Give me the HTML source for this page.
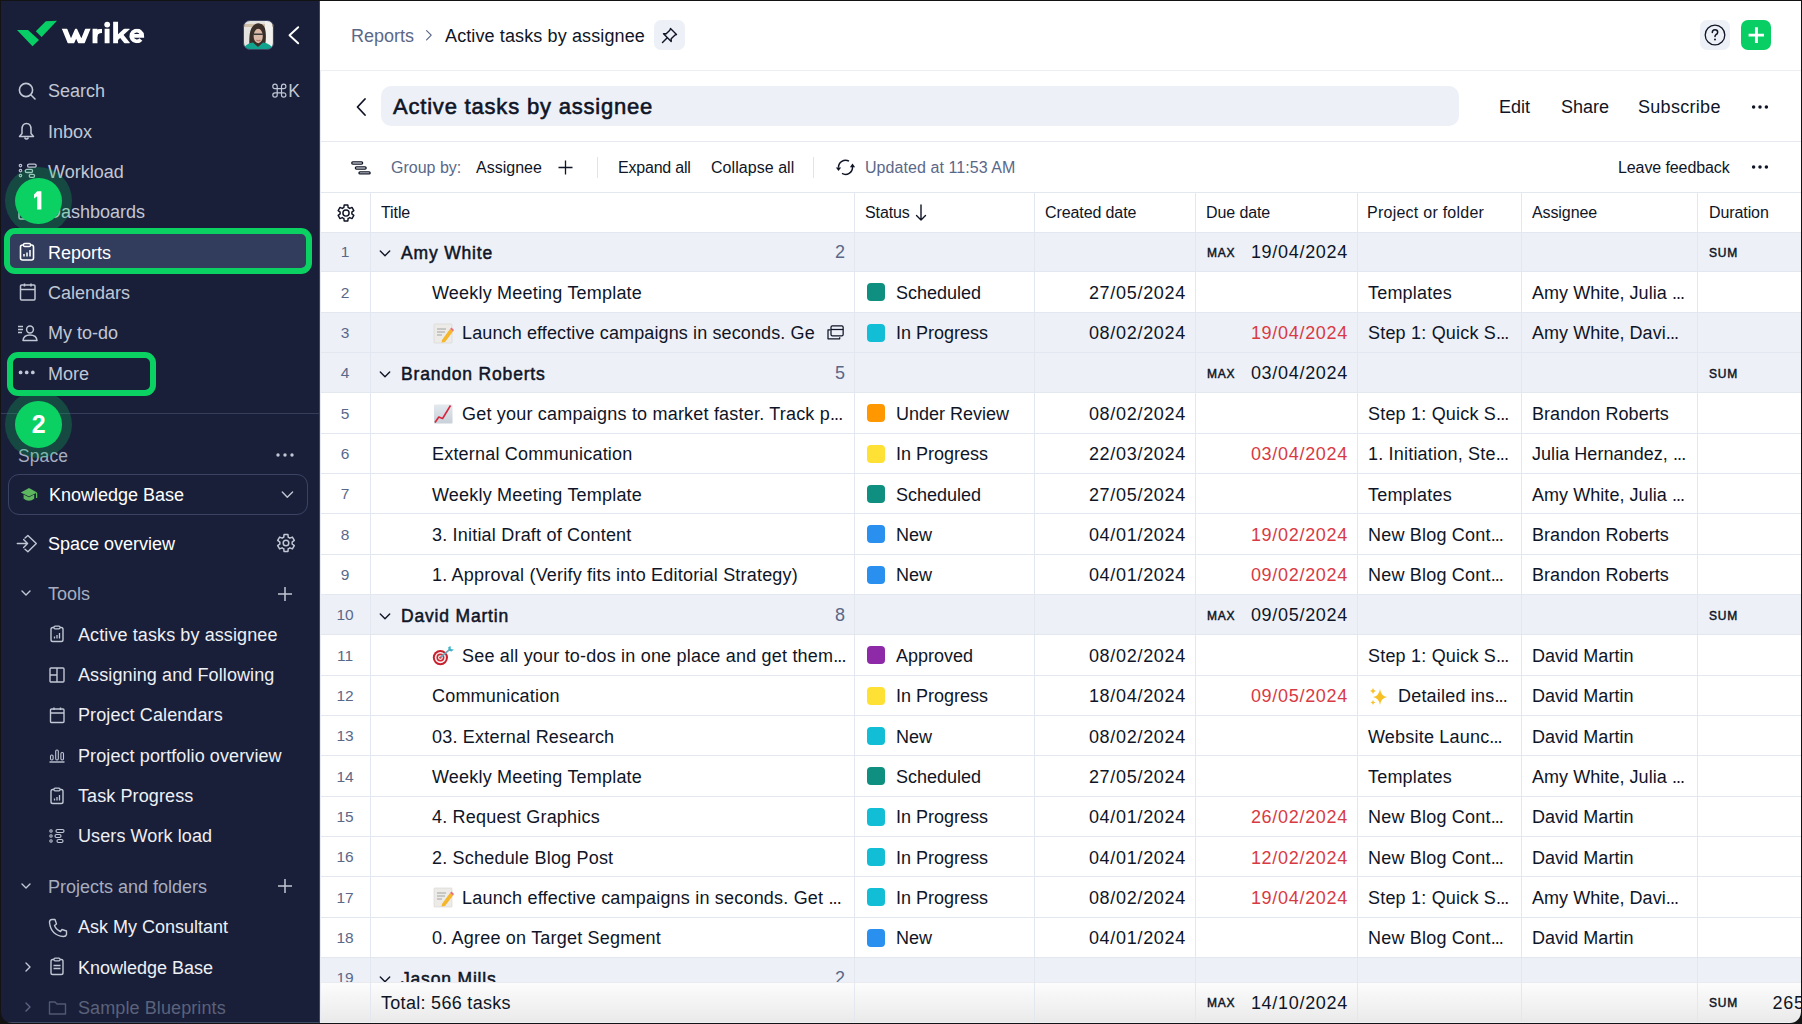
<!DOCTYPE html><html><head><meta charset="utf-8"><style>
*{margin:0;padding:0;box-sizing:border-box}
html,body{width:1802px;height:1024px;overflow:hidden;background:#121212}
body{position:relative;font-family:"Liberation Sans",sans-serif}
.t{position:absolute;white-space:nowrap}
.b{position:absolute}
#win{position:absolute;left:0;top:0;width:1802px;height:1024px;overflow:hidden;background:#fff}
#frame{position:absolute;left:1px;top:1px;width:1800px;height:1022px;border-radius:0 0 11px 11px;box-shadow:0 0 0 40px #131313;pointer-events:none}
</style></head><body><div id="win">

<div class="b" style="left:0px;top:0px;width:320px;height:1024px;background:#191f39"></div>
<svg class="b" style="left:14px;top:18px;" width="48" height="32" viewBox="0 0 48 32" fill="none"><path d="M3 12 L14 12 L25 22 L18.5 28.2 Z" fill="#08cf65"/><path d="M21.8 13.2 L31.8 3.2 L43 2.8 L27.6 19 Z" fill="#08cf65"/></svg>
<svg class="b" style="left:56px;top:18px;" width="94" height="30" viewBox="0 0 94 30" fill="none"><defs><clipPath id="wc"><rect x="0" y="28.7" width="200" height="14.6"/><rect x="110" y="21.8" width="10" height="21.5"/></clipPath></defs><g transform="translate(-56 -18)"><g clip-path="url(#wc)" fill="none" stroke="#fff" stroke-width="4.9"><path d="M63.4 26 L70.9 44.5 L76.1 32.8 L81.5 44.5 L89 26" stroke-linejoin="miter" stroke-miterlimit="3"/><path d="M95 44 V28"/><path d="M95 37 Q95.2 31 102 30.9" stroke-width="4.4"/><path d="M107.1 44 V28"/><path d="M115.6 44 V21"/><path d="M116.5 38.5 L128.5 27.5" stroke-width="4.4"/><path d="M120.4 34.6 L128.3 44.5" stroke-width="4.6"/><path d="M140.9 39.4 A5.4 5.4 0 1 1 142.15 35.9 H131.3" stroke-width="3.9"/></g><circle cx="107.2" cy="24.6" r="2.9" fill="#fff"/></g></svg>
<svg class="b" style="left:243px;top:20px;" width="31" height="30" viewBox="0 0 31 30" fill="none"><defs><clipPath id="av"><rect x="0.5" y="0.5" width="30" height="29" rx="6.5"/></clipPath></defs><g clip-path="url(#av)"><rect width="31" height="30" fill="#e4e2de"/><rect x="1" y="4" width="30" height="3" fill="#cdbfa8"/><rect x="22" y="1" width="7" height="28" fill="#f2f1ee"/><path d="M6.5 28 Q5.5 14 8.5 8 Q12 2.5 16.5 3.5 Q22 4.5 22.5 11 Q23.5 18 22 26 Z" fill="#3a2e29"/><ellipse cx="15.2" cy="16" rx="4.6" ry="7.2" fill="#dcb9a6"/><path d="M10.8 14.2 H19.8" stroke="#3a3a3a" stroke-width="1.6"/><path d="M13.5 20 Q15.5 21.5 17.5 20" stroke="#b86f6a" stroke-width="1.2"/><path d="M0 30 Q2 23.5 10 22.5 L15 27 L20 22.5 Q28 23.5 31 30 Z" fill="#12a38f"/></g><rect x="0.5" y="0.5" width="30" height="29" rx="6.5" stroke="#3c4663" stroke-width="1"/></svg>
<svg class="b" style="left:286px;top:25px;" width="16" height="20" viewBox="0 0 16 20" fill="none"><path d="M12.2 2.2 L3.5 10.2 L12.2 18.3" stroke="#ffffff" stroke-width="1.9" stroke-linecap="round" stroke-linejoin="round"/></svg>
<div class="b" style="left:4px;top:228px;width:308px;height:46px;border:6px solid #0ad162;border-radius:11px;background:#323d5d"></div>
<div class="b" style="left:7px;top:352px;width:149px;height:44px;border:6px solid #0ad162;border-radius:11px"></div>
<div class="t " style="left:48px;top:79.20px;font-size:18px;line-height:24px;color:#c1c7d4;font-weight:400;">Search</div>
<div class="t " style="left:48px;top:119.70px;font-size:18px;line-height:24px;color:#c1c7d4;font-weight:400;">Inbox</div>
<div class="t " style="left:48px;top:159.70px;font-size:18px;line-height:24px;color:#c1c7d4;font-weight:400;">Workload</div>
<div class="t " style="left:48px;top:200.20px;font-size:18px;line-height:24px;color:#c1c7d4;font-weight:400;">Dashboards</div>
<div class="t " style="left:48px;top:240.70px;font-size:18px;line-height:24px;color:#ffffff;font-weight:400;">Reports</div>
<div class="t " style="left:48px;top:280.70px;font-size:18px;line-height:24px;color:#c1c7d4;font-weight:400;">Calendars</div>
<div class="t " style="left:48px;top:321.20px;font-size:18px;line-height:24px;color:#c1c7d4;font-weight:400;">My to-do</div>
<div class="t " style="left:48px;top:361.70px;font-size:18px;line-height:24px;color:#c1c7d4;font-weight:400;">More</div>
<svg class="b" style="left:270px;top:82px;" width="18" height="18" viewBox="0 0 18 18" fill="none"><g transform="translate(-270 -82)"><path d="M277.2 88.6 V86.3 A2.2 2.2 0 1 0 275 88.6 H283.7 A2.2 2.2 0 1 0 281.5 86.3 V95 A2.2 2.2 0 1 0 283.7 92.8 H275 A2.2 2.2 0 1 0 277.2 95 Z" stroke="#c1c7d4" stroke-width="1.2"/></g></svg>
<div class="t " style="left:288.3px;top:79.40px;font-size:17.5px;line-height:24px;color:#c1c7d4;font-weight:400;">K</div>
<svg class="b" style="left:16px;top:80px;" width="22" height="22" viewBox="0 0 22 22" fill="none"><circle cx="10" cy="10" r="6.6" stroke="#c1c7d4" stroke-width="1.6"/><path d="M15 15 L19 19" stroke="#c1c7d4" stroke-width="1.6" stroke-linecap="round"/></svg>
<svg class="b" style="left:16px;top:121px;" width="22" height="22" viewBox="0 0 22 22" fill="none"><path d="M10.5 2.5 C7 2.5 6 5.5 6 8.5 L6 12.5 L3.5 15.5 L17.5 15.5 L15 12.5 L15 8.5 C15 5.5 14 2.5 10.5 2.5 Z" stroke="#c1c7d4" stroke-width="1.5" stroke-linejoin="round"/><path d="M8.5 16.5 Q10.5 19.5 12.5 16.5" stroke="#c1c7d4" stroke-width="1.5"/></svg>
<svg class="b" style="left:16px;top:161px;" width="22" height="22" viewBox="0 0 22 22" fill="none"><circle cx="4.5" cy="4.6" r="1.25" stroke="#c1c7d4" stroke-width="1.1"/><circle cx="4.5" cy="9.6" r="1.25" stroke="#c1c7d4" stroke-width="1.1"/><circle cx="4.5" cy="14.6" r="1.25" stroke="#c1c7d4" stroke-width="1.1"/><rect x="11.6" y="3.1" width="8.6" height="3.1" rx="1.55" stroke="#c1c7d4" stroke-width="1.3"/><rect x="9.3" y="8.4" width="7.3" height="3.1" rx="1.55" stroke="#c1c7d4" stroke-width="1.3"/><rect x="13.2" y="13.3" width="5.4" height="3.1" rx="1.55" stroke="#c1c7d4" stroke-width="1.3"/></svg>
<svg class="b" style="left:16px;top:201px;" width="22" height="22" viewBox="0 0 22 22" fill="none"><rect x="3" y="3" width="15" height="15" rx="1.5" stroke="#c1c7d4" stroke-width="1.5"/><path d="M10.5 3 V18 M3 10 H10.5" stroke="#c1c7d4" stroke-width="1.5"/></svg>
<svg class="b" style="left:16px;top:241px;" width="22" height="22" viewBox="0 0 22 22" fill="none"><rect x="4.5" y="4" width="13" height="15" rx="2" stroke="#fff" stroke-width="1.6"/><rect x="7.5" y="2.5" width="7" height="3" rx="1.2" stroke="#fff" stroke-width="1.4" fill="#323d5d"/><path d="M8 15.5 V13 M11 15.5 V11.5 M14 15.5 V9" stroke="#fff" stroke-width="1.5"/></svg>
<svg class="b" style="left:16px;top:281px;" width="22" height="22" viewBox="0 0 22 22" fill="none"><rect x="4.5" y="4" width="14.5" height="15" rx="1" stroke="#c1c7d4" stroke-width="1.5"/><path d="M4.5 8.5 H19 M8.5 2.5 V5.5 M15 2.5 V5.5" stroke="#c1c7d4" stroke-width="1.5"/></svg>
<svg class="b" style="left:16px;top:322px;" width="24" height="22" viewBox="0 0 24 22" fill="none"><path d="M2 4.5 H7 M2 7.5 H7 M2 10.5 H6" stroke="#c1c7d4" stroke-width="1.4"/><circle cx="14" cy="7.5" r="3.4" stroke="#c1c7d4" stroke-width="1.5"/><path d="M7 18.5 Q7.5 13 14 13 Q20.5 13 21 18.5 Z" stroke="#c1c7d4" stroke-width="1.5" stroke-linejoin="round"/></svg>
<svg class="b" style="left:16px;top:363px;" width="22" height="22" viewBox="0 0 22 22" fill="none"><circle cx="4.6" cy="9.4" r="1.85" fill="#c1c7d4"/><circle cx="10.7" cy="9.4" r="1.85" fill="#c1c7d4"/><circle cx="16.8" cy="9.4" r="1.85" fill="#c1c7d4"/></svg>
<div class="b" style="left:0px;top:413px;width:320px;height:1px;background:#343d5a"></div>
<div class="t " style="left:18px;top:443.80px;font-size:17.5px;line-height:24px;color:#a6aec0;font-weight:400;letter-spacing:0.1px">Space</div>
<svg class="b" style="left:274px;top:446px;" width="22" height="18" viewBox="0 0 22 18" fill="none"><circle cx="4" cy="9" r="1.7" fill="#c1c7d4"/><circle cx="11" cy="9" r="1.7" fill="#c1c7d4"/><circle cx="18" cy="9" r="1.7" fill="#c1c7d4"/></svg>
<div class="b" style="left:8px;top:474px;width:300px;height:41px;border:1px solid #3a4462;border-radius:11px"></div>
<svg class="b" style="left:19px;top:484px;" width="22" height="20" viewBox="0 0 22 20" fill="none"><path d="M1.8 8.6 L10 3.9 L18.2 8.6 L10 12.6 Z" fill="#5eb75f"/><path d="M4.6 10.6 V14.8 Q10 18.6 15.2 14.8 V10.6 L10 13.3 Z" fill="#5eb75f"/><path d="M17.6 9 V14" stroke="#5eb75f" stroke-width="1.3"/></svg>
<div class="t " style="left:49px;top:482.50px;font-size:18px;line-height:24px;color:#ffffff;font-weight:400;">Knowledge Base</div>
<svg class="b" style="left:279px;top:487px;" width="16" height="14" viewBox="0 0 16 14" fill="none"><path d="M3.3 5 L8.3 10.2 L13.6 5" stroke="#c1c7d4" stroke-width="1.4" stroke-linecap="round" stroke-linejoin="round"/></svg>
<svg class="b" style="left:14px;top:532px;" width="26" height="24" viewBox="0 0 26 24" fill="none"><g transform="translate(-14 -532)" stroke="#c1c7d4" stroke-width="1.4" stroke-linecap="round" stroke-linejoin="round" fill="none"><path d="M17.3 543.5 H27.6 M23.6 539.6 L27.6 543.5 L23.6 547.4"/><path d="M25 538 L27.9 535.4 L36.3 543.5 L27.9 551.8 L25 549.2"/></g></svg>
<div class="t " style="left:48px;top:531.50px;font-size:18px;line-height:24px;color:#ffffff;font-weight:400;">Space overview</div>
<svg class="b" style="left:274px;top:531.4px;" width="24" height="24" viewBox="0 0 24 24" fill="none"><path d="M8.90 6.63 L9.78 6.21 L10.04 3.52 L13.96 3.52 L14.22 6.21 L15.10 6.63 L15.90 7.18 L18.36 6.07 L20.32 9.46 L18.12 11.03 L18.20 12.00 L18.12 12.97 L20.32 14.54 L18.36 17.93 L15.90 16.82 L15.10 17.37 L14.22 17.79 L13.96 20.48 L10.04 20.48 L9.78 17.79 L8.90 17.37 L8.10 16.82 L5.64 17.93 L3.68 14.54 L5.88 12.97 L5.80 12.00 L5.88 11.03 L3.68 9.46 L5.64 6.07 L8.10 7.18 Z" stroke="#c1c7d4" stroke-width="1.5" stroke-linejoin="round"/><circle cx="12" cy="12" r="2.8" stroke="#c1c7d4" stroke-width="1.5"/></svg>
<svg class="b" style="left:18px;top:585px;" width="16" height="16" viewBox="0 0 16 16" fill="none"><path d="M4 6 L8 10 L12 6" stroke="#c1c7d4" stroke-width="1.4" stroke-linecap="round" stroke-linejoin="round"/></svg>
<div class="t " style="left:48px;top:582.00px;font-size:18px;line-height:24px;color:#a6aec0;font-weight:400;">Tools</div>
<svg class="b" style="left:276px;top:585px;" width="18" height="18" viewBox="0 0 18 18" fill="none"><path d="M9 2 V16 M2 9 H16" stroke="#c1c7d4" stroke-width="1.5"/></svg>
<div class="t " style="left:78px;top:622.50px;font-size:18px;line-height:24px;color:#eef0f5;font-weight:400;letter-spacing:0.1px">Active tasks by assignee</div>
<svg class="b" style="left:47px;top:624px;" width="22" height="22" viewBox="0 0 22 22" fill="none"><rect x="4" y="3.5" width="12" height="14" rx="1.8" stroke="#c1c7d4" stroke-width="1.4"/><rect x="7" y="2.2" width="6" height="2.6" rx="1" stroke="#c1c7d4" stroke-width="1.2" fill="#191f39"/><path d="M7.5 14.5 V12.5 M10 14.5 V11 M12.5 14.5 V9" stroke="#c1c7d4" stroke-width="1.3"/></svg>
<div class="t " style="left:78px;top:663.00px;font-size:18px;line-height:24px;color:#eef0f5;font-weight:400;letter-spacing:0.1px">Assigning and Following</div>
<svg class="b" style="left:47px;top:665px;" width="22" height="22" viewBox="0 0 22 22" fill="none"><rect x="3" y="3" width="14" height="14" rx="1" stroke="#c1c7d4" stroke-width="1.4"/><path d="M10 3 V17 M3 10 H10" stroke="#c1c7d4" stroke-width="1.4"/></svg>
<div class="t " style="left:78px;top:703.00px;font-size:18px;line-height:24px;color:#eef0f5;font-weight:400;letter-spacing:0.1px">Project Calendars</div>
<svg class="b" style="left:47px;top:705px;" width="22" height="22" viewBox="0 0 22 22" fill="none"><rect x="3.5" y="4" width="13.5" height="13.5" rx="1" stroke="#c1c7d4" stroke-width="1.4"/><path d="M3.5 8 H17 M7 2.5 V5 M13.5 2.5 V5" stroke="#c1c7d4" stroke-width="1.4"/></svg>
<div class="t " style="left:78px;top:743.50px;font-size:18px;line-height:24px;color:#eef0f5;font-weight:400;letter-spacing:0.1px">Project portfolio overview</div>
<svg class="b" style="left:47px;top:745px;" width="22" height="22" viewBox="0 0 22 22" fill="none"><path d="M2.5 17 H17.5" stroke="#c1c7d4" stroke-width="1.4"/><rect x="3.5" y="10" width="2.6" height="5" rx="1.2" stroke="#c1c7d4" stroke-width="1.1"/><rect x="8.7" y="5" width="2.6" height="10" rx="1.2" stroke="#c1c7d4" stroke-width="1.1"/><rect x="13.9" y="7.5" width="2.6" height="7.5" rx="1.2" stroke="#c1c7d4" stroke-width="1.1"/></svg>
<div class="t " style="left:78px;top:784.00px;font-size:18px;line-height:24px;color:#eef0f5;font-weight:400;letter-spacing:0.1px">Task Progress</div>
<svg class="b" style="left:47px;top:786px;" width="22" height="22" viewBox="0 0 22 22" fill="none"><rect x="4" y="3.5" width="12" height="14" rx="1.8" stroke="#c1c7d4" stroke-width="1.4"/><rect x="7" y="2.2" width="6" height="2.6" rx="1" stroke="#c1c7d4" stroke-width="1.2" fill="#191f39"/><path d="M7.5 14.5 V12.5 M10 14.5 V11 M12.5 14.5 V9" stroke="#c1c7d4" stroke-width="1.3"/></svg>
<div class="t " style="left:78px;top:824.00px;font-size:18px;line-height:24px;color:#eef0f5;font-weight:400;letter-spacing:0.1px">Users Work load</div>
<svg class="b" style="left:47px;top:826px;" width="22" height="22" viewBox="0 0 22 22" fill="none"><circle cx="4" cy="5" r="1.2" stroke="#c1c7d4" stroke-width="1.1"/><circle cx="4" cy="10" r="1.2" stroke="#c1c7d4" stroke-width="1.1"/><circle cx="4" cy="15" r="1.2" stroke="#c1c7d4" stroke-width="1.1"/><rect x="9" y="3.5" width="8" height="3" rx="1.5" stroke="#c1c7d4" stroke-width="1.2"/><rect x="8" y="8.5" width="6" height="3" rx="1.5" stroke="#c1c7d4" stroke-width="1.2"/><rect x="10" y="13.5" width="6" height="3" rx="1.5" stroke="#c1c7d4" stroke-width="1.2"/></svg>
<svg class="b" style="left:18px;top:878px;" width="16" height="16" viewBox="0 0 16 16" fill="none"><path d="M4 6 L8 10 L12 6" stroke="#c1c7d4" stroke-width="1.4" stroke-linecap="round" stroke-linejoin="round"/></svg>
<div class="t " style="left:48px;top:874.50px;font-size:18px;line-height:24px;color:#a6aec0;font-weight:400;">Projects and folders</div>
<svg class="b" style="left:276px;top:877px;" width="18" height="18" viewBox="0 0 18 18" fill="none"><path d="M9 2 V16 M2 9 H16" stroke="#c1c7d4" stroke-width="1.5"/></svg>
<svg class="b" style="left:46px;top:916px;" width="24" height="24" viewBox="0 0 24 24" fill="none"><path d="M6 3.5 L9 3.5 L10.5 8 L8.5 9.5 Q10 13.5 14.5 15.5 L16 13.5 L20.5 15 L20.5 18.5 Q20 20.5 17.5 20.5 Q5 19.5 3.5 6.5 Q3.5 3.5 6 3.5 Z" stroke="#c1c7d4" stroke-width="1.4" stroke-linejoin="round"/></svg>
<div class="t " style="left:78px;top:915.00px;font-size:18px;line-height:24px;color:#eef0f5;font-weight:400;">Ask My Consultant</div>
<svg class="b" style="left:20px;top:959px;" width="16" height="16" viewBox="0 0 16 16" fill="none"><path d="M6 4 L10 8 L6 12" stroke="#c1c7d4" stroke-width="1.4" stroke-linecap="round" stroke-linejoin="round"/></svg>
<svg class="b" style="left:47px;top:956px;" width="22" height="22" viewBox="0 0 22 22" fill="none"><rect x="4" y="3.5" width="12" height="15" rx="1.8" stroke="#c1c7d4" stroke-width="1.4"/><rect x="7" y="2.2" width="6" height="2.6" rx="1" stroke="#c1c7d4" stroke-width="1.2" fill="#191f39"/><path d="M6.5 9.5 H13.5 M6.5 12.5 H13.5" stroke="#c1c7d4" stroke-width="1.3"/></svg>
<div class="t " style="left:78px;top:955.50px;font-size:18px;line-height:24px;color:#eef0f5;font-weight:400;">Knowledge Base</div>
<svg class="b" style="left:20px;top:999px;" width="16" height="16" viewBox="0 0 16 16" fill="none"><path d="M6 4 L10 8 L6 12" stroke="#5d6580" stroke-width="1.4" stroke-linecap="round" stroke-linejoin="round"/></svg>
<svg class="b" style="left:47px;top:997px;" width="22" height="22" viewBox="0 0 22 22" fill="none"><path d="M2.5 5 H8 L10 7 H18.5 V17 H2.5 Z" stroke="#515870" stroke-width="1.4" stroke-linejoin="round"/></svg>
<div class="t " style="left:78px;top:996.00px;font-size:18px;line-height:24px;color:#5b627a;font-weight:400;letter-spacing:0.1px">Sample Blueprints</div>
<div class="b" style="left:5.0px;top:167.10000000000002px;width:67.4px;height:67.4px;border-radius:50%;background:rgba(10,209,98,0.24)"></div>
<div class="b" style="left:15.400000000000002px;top:177.5px;width:46.6px;height:46.6px;border-radius:50%;background:#0ad162"></div>
<svg class="b" style="left:30px;top:188px;" width="16" height="26" viewBox="0 0 16 26" fill="none"><path d="M7.2 3.3 H11.4 V21.6 H7.2 V8.2 L4 10.6 V6.5 Z" fill="#fff"/></svg>
<div class="b" style="left:5.0px;top:390.7px;width:67.4px;height:67.4px;border-radius:50%;background:rgba(10,209,98,0.24)"></div>
<div class="b" style="left:15.400000000000002px;top:401.09999999999997px;width:46.6px;height:46.6px;border-radius:50%;background:#0ad162"></div>
<div class="t " style="left:18.700000000000003px;top:409.40px;font-size:25px;line-height:30px;color:#fff;font-weight:700;width:40px;text-align:center">2</div>
<div class="t " style="left:351px;top:23.80px;font-size:18px;line-height:24px;color:#5a6888;font-weight:400;">Reports</div>
<svg class="b" style="left:421px;top:27px;" width="14" height="16" viewBox="0 0 14 16" fill="none"><path d="M5.6 3.6 L10.2 8.2 L5.6 12.8" stroke="#5a6888" stroke-width="1.2" stroke-linecap="round" stroke-linejoin="round"/></svg>
<div class="t " style="left:445px;top:23.80px;font-size:18px;line-height:24px;color:#0f1526;font-weight:400;letter-spacing:0.12px">Active tasks by assignee</div>
<div class="b" style="left:654px;top:20px;width:31px;height:30px;background:#edf0f6;border-radius:7px"></div>
<svg class="b" style="left:659px;top:25px;" width="21" height="21" viewBox="0 0 21 21" fill="none"><path d="M11.5 3.5 L17.5 9.5 L15.8 10.2 L12.2 13.8 L12.2 16.5 L4.5 8.8 L7.2 8.8 L10.8 5.2 Z" stroke="#0f1526" stroke-width="1.4" stroke-linejoin="round"/><path d="M8 13 L3.5 17.5" stroke="#0f1526" stroke-width="1.4" stroke-linecap="round"/></svg>
<div class="b" style="left:1700px;top:20px;width:30px;height:30px;background:#edf0f6;border-radius:7px"></div>
<svg class="b" style="left:1703px;top:23px;" width="24" height="24" viewBox="0 0 24 24" fill="none"><circle cx="12" cy="12" r="9.8" stroke="#0f1526" stroke-width="1.3"/><path d="M9.3 9.6 Q9.3 6.8 12 6.8 Q14.7 6.8 14.7 9.3 Q14.7 11 12.8 11.8 Q12 12.3 12 13.6" stroke="#0f1526" stroke-width="1.5" stroke-linecap="round"/><circle cx="12" cy="16.6" r="1" fill="#0f1526"/></svg>
<div class="b" style="left:1740.5px;top:20px;width:30px;height:30px;background:#09ce63;border-radius:7px"></div>
<svg class="b" style="left:1740.5px;top:20px;" width="30" height="30" viewBox="0 0 30 30" fill="none"><path d="M15.4 7.2 V23 M7.6 15.1 H23" stroke="#fff" stroke-width="2.9"/></svg>
<div class="b" style="left:320px;top:70px;width:1482px;height:1px;background:#eceef4"></div>
<svg class="b" style="left:352px;top:96px;" width="18" height="22" viewBox="0 0 18 22" fill="none"><path d="M13 3 L5.5 11 L13 19" stroke="#0f1526" stroke-width="1.8" stroke-linecap="round" stroke-linejoin="round"/></svg>
<div class="b" style="left:381px;top:86px;width:1078px;height:40px;background:#edf0f7;border-radius:10px"></div>
<div class="t " style="left:393px;top:92.50px;font-size:22px;line-height:28px;color:#0f1526;font-weight:400;-webkit-text-stroke:0.6px #0f1526;letter-spacing:0.8px">Active tasks by assignee</div>
<div class="t " style="left:1499px;top:94.50px;font-size:18px;line-height:24px;color:#0f1526;font-weight:400;">Edit</div>
<div class="t " style="left:1561px;top:94.50px;font-size:18px;line-height:24px;color:#0f1526;font-weight:400;">Share</div>
<div class="t " style="left:1638px;top:94.50px;font-size:18px;line-height:24px;color:#0f1526;font-weight:400;letter-spacing:0.3px">Subscribe</div>
<svg class="b" style="left:1750px;top:102.5px;" width="20" height="8" viewBox="0 0 20 8" fill="none"><circle cx="3.6" cy="4" r="1.75" fill="#0f1526"/><circle cx="10" cy="4" r="1.75" fill="#0f1526"/><circle cx="16.4" cy="4" r="1.75" fill="#0f1526"/></svg>
<div class="b" style="left:320px;top:141px;width:1482px;height:1px;background:#e6e9f1"></div>
<svg class="b" style="left:348px;top:156px;" width="26" height="22" viewBox="0 0 26 22" fill="none"><rect x="3.75" y="5.95" width="10.9" height="2.1" rx="1.05" stroke="#0f1526" stroke-width="1.3"/><rect x="7.35" y="10.85" width="10.8" height="2.2" rx="1.1" stroke="#0f1526" stroke-width="1.3"/><rect x="10.95" y="15.85" width="11.2" height="2.1" rx="1.05" stroke="#0f1526" stroke-width="1.3"/></svg>
<div class="t " style="left:391px;top:156.90px;font-size:16px;line-height:22px;color:#5a6888;font-weight:400;letter-spacing:0px">Group by:</div>
<div class="t " style="left:476px;top:156.90px;font-size:16px;line-height:22px;color:#0f1526;font-weight:400;letter-spacing:0px">Assignee</div>
<svg class="b" style="left:557px;top:159px;" width="17" height="17" viewBox="0 0 17 17" fill="none"><path d="M8.5 1.5 V15.5 M1.5 8.5 H15.5" stroke="#0f1526" stroke-width="1.3"/></svg>
<div class="b" style="left:597px;top:157px;width:1px;height:21px;background:#dfe3ec"></div>
<div class="t " style="left:618px;top:156.90px;font-size:16px;line-height:22px;color:#0f1526;font-weight:400;letter-spacing:-0.2px">Expand all</div>
<div class="t " style="left:711px;top:156.90px;font-size:16px;line-height:22px;color:#0f1526;font-weight:400;letter-spacing:0.05px">Collapse all</div>
<div class="b" style="left:813px;top:157px;width:1px;height:21px;background:#dfe3ec"></div>
<svg class="b" style="left:834px;top:156px;" width="24" height="22" viewBox="0 0 24 22" fill="none"><path d="M15 5.2 A7 7 0 0 0 4.5 11.6" stroke="#0f1526" stroke-width="1.5"/><path d="M1.9 11.4 L7.1 11.4 L4.5 14.9 Z" fill="#0f1526"/><path d="M8 17.4 A7 7 0 0 0 18.5 11" stroke="#0f1526" stroke-width="1.5"/><path d="M15.9 11.2 L21.1 11.2 L18.5 7.6 Z" fill="#0f1526"/></svg>
<div class="t " style="left:865px;top:156.90px;font-size:16px;line-height:22px;color:#5a6888;font-weight:400;letter-spacing:0.07px">Updated at 11:53 AM</div>
<div class="t " style="left:1618px;top:156.90px;font-size:16px;line-height:22px;color:#0f1526;font-weight:400;letter-spacing:-0.1px">Leave feedback</div>
<svg class="b" style="left:1750px;top:163px;" width="20" height="8" viewBox="0 0 20 8" fill="none"><circle cx="3.6" cy="4" r="1.75" fill="#0f1526"/><circle cx="10" cy="4" r="1.75" fill="#0f1526"/><circle cx="16.4" cy="4" r="1.75" fill="#0f1526"/></svg>
<div class="b" style="left:320px;top:192px;width:1482px;height:1px;background:#e3e7f0"></div>
<svg class="b" style="left:333.5px;top:200.9px;" width="24" height="24" viewBox="0 0 24 24" fill="none"><path d="M9.05 6.89 L9.89 6.49 L10.16 4.01 L13.84 4.01 L14.11 6.49 L14.95 6.89 L15.71 7.41 L18.00 6.41 L19.84 9.60 L17.83 11.08 L17.90 12.00 L17.83 12.92 L19.84 14.40 L18.00 17.59 L15.71 16.59 L14.95 17.11 L14.11 17.51 L13.84 19.99 L10.16 19.99 L9.89 17.51 L9.05 17.11 L8.29 16.59 L6.00 17.59 L4.16 14.40 L6.17 12.92 L6.10 12.00 L6.17 11.08 L4.16 9.60 L6.00 6.41 L8.29 7.41 Z" stroke="#0f1526" stroke-width="1.45" stroke-linejoin="round"/><circle cx="12" cy="12" r="3.1" stroke="#0f1526" stroke-width="1.45"/></svg>
<div class="t " style="left:381px;top:201.50px;font-size:16px;line-height:22px;color:#0f1526;font-weight:400;letter-spacing:-0.1px">Title</div>
<div class="t " style="left:865px;top:201.50px;font-size:16px;line-height:22px;color:#0f1526;font-weight:400;letter-spacing:-0.1px">Status</div>
<div class="t " style="left:1045px;top:201.50px;font-size:16px;line-height:22px;color:#0f1526;font-weight:400;letter-spacing:-0.1px">Created date</div>
<div class="t " style="left:1206px;top:201.50px;font-size:16px;line-height:22px;color:#0f1526;font-weight:400;letter-spacing:-0.1px">Due date</div>
<div class="t " style="left:1367px;top:201.50px;font-size:16px;line-height:22px;color:#0f1526;font-weight:400;letter-spacing:0.25px">Project or folder</div>
<div class="t " style="left:1532px;top:201.50px;font-size:16px;line-height:22px;color:#0f1526;font-weight:400;letter-spacing:-0.1px">Assignee</div>
<div class="t " style="left:1709px;top:201.50px;font-size:16px;line-height:22px;color:#0f1526;font-weight:400;letter-spacing:-0.1px">Duration</div>
<svg class="b" style="left:913px;top:202px;" width="16" height="22" viewBox="0 0 16 22" fill="none"><path d="M8 3 V18 M3.5 13.5 L8 18 L12.5 13.5" stroke="#0f1526" stroke-width="1.4" stroke-linecap="round" stroke-linejoin="round"/></svg>
<div class="b" style="left:320px;top:232.000px;width:1482px;height:40.333px;background:#edf0f7;border-bottom:1px solid #e3e7f0"></div>
<div class="t " style="left:320px;top:242.47px;font-size:15.5px;line-height:20px;color:#5a6888;font-weight:400;width:50px;text-align:center">1</div>
<svg class="b" style="left:377px;top:245.76649999999998px;" width="16" height="16" viewBox="0 0 16 16" fill="none"><path d="M3.3 5 L8 9.7 L12.7 5" stroke="#0f1526" stroke-width="1.4" stroke-linecap="round" stroke-linejoin="round"/></svg>
<div class="t " style="left:401px;top:240.67px;font-size:17.5px;line-height:24px;color:#0f1526;font-weight:400;-webkit-text-stroke:0.5px #0f1526;letter-spacing:0.82px">Amy White</div>
<div class="t" style="right:957px;top:240.17px;font-size:18px;line-height:24px;color:#5a6888;font-weight:400;text-align:right;">2</div>
<div class="t " style="left:1207px;top:245.17px;font-size:12px;line-height:16px;color:#0f1526;font-weight:400;-webkit-text-stroke:0.45px #0f1526;letter-spacing:0.8px">MAX</div>
<div class="t" style="right:454px;top:240.17px;font-size:18px;line-height:24px;color:#0f1526;font-weight:400;text-align:right;letter-spacing:0.7px">19/04/2024</div>
<div class="t " style="left:1709px;top:245.17px;font-size:12px;line-height:16px;color:#0f1526;font-weight:400;-webkit-text-stroke:0.45px #0f1526;letter-spacing:0.75px">SUM</div>
<div class="b" style="left:320px;top:272.333px;width:1482px;height:40.333px;background:#ffffff;border-bottom:1px solid #e3e7f0"></div>
<div class="t " style="left:320px;top:282.80px;font-size:15.5px;line-height:20px;color:#5a6888;font-weight:400;width:50px;text-align:center">2</div>
<div class="t " style="left:432px;top:281.00px;font-size:18px;line-height:24px;color:#0f1526;font-weight:400;letter-spacing:0.2px">Weekly Meeting Template</div>
<div class="b" style="left:867px;top:283.49949999999995px;width:18px;height:18px;background:#0f8f80;border-radius:4px"></div>
<div class="t " style="left:896px;top:281.00px;font-size:18px;line-height:24px;color:#0f1526;font-weight:400;letter-spacing:0px">Scheduled</div>
<div class="t" style="right:616px;top:281.00px;font-size:18px;line-height:24px;color:#0f1526;font-weight:400;text-align:right;letter-spacing:0.7px">27/05/2024</div>
<div class="t " style="left:1368px;top:281.00px;font-size:18px;line-height:24px;color:#0f1526;font-weight:400;letter-spacing:0.2px">Templates</div>
<div class="t " style="left:1532px;top:281.00px;font-size:18px;line-height:24px;color:#0f1526;font-weight:400;letter-spacing:0.05px">Amy White, Julia <span style="letter-spacing:-0.9px">...</span></div>
<div class="b" style="left:320px;top:312.666px;width:1482px;height:40.333px;background:#edf0f7;border-bottom:1px solid #e3e7f0"></div>
<div class="t " style="left:320px;top:323.13px;font-size:15.5px;line-height:20px;color:#5a6888;font-weight:400;width:50px;text-align:center">3</div>
<svg class="b" style="left:433px;top:322.8325px;" width="21" height="21" viewBox="0 0 21 21" fill="none"><rect x="1" y="1" width="18" height="19" rx="0.6" fill="#ecebe8" stroke="#d6d5d0" stroke-width="0.6"/><path d="M4 6 H13 M4 9 H12 M4 12 H9" stroke="#9a9a9a" stroke-width="0.9"/><path d="M9 17 L17 6 L20 8.5 L12 19 L8.5 19.5 Z" fill="#f5b62a"/><path d="M17 6 L20 8.5 L21 7 L18.5 4.5 Z" fill="#e9707a"/></svg>
<div class="t " style="left:462px;top:321.33px;font-size:18px;line-height:24px;color:#0f1526;font-weight:400;letter-spacing:0.12px">Launch effective campaigns in seconds. Ge</div>
<svg class="b" style="left:824px;top:322px;" width="24" height="22" viewBox="0 0 24 22" fill="none"><rect x="7" y="3.85" width="12.15" height="9.95" rx="1.4" stroke="#0f1526" stroke-width="1.25"/><path d="M7 7.5 H19.2" stroke="#0f1526" stroke-width="1.25"/><path d="M6.6 7.8 H4 V16.8 H15.7 V15.2" stroke="#0f1526" stroke-width="1.25" stroke-linejoin="round"/></svg>
<div class="b" style="left:867px;top:323.8325px;width:18px;height:18px;background:#11bed6;border-radius:4px"></div>
<div class="t " style="left:896px;top:321.33px;font-size:18px;line-height:24px;color:#0f1526;font-weight:400;letter-spacing:0px">In Progress</div>
<div class="t" style="right:616px;top:321.33px;font-size:18px;line-height:24px;color:#0f1526;font-weight:400;text-align:right;letter-spacing:0.7px">08/02/2024</div>
<div class="t" style="right:454px;top:321.33px;font-size:18px;line-height:24px;color:#d83a44;font-weight:400;text-align:right;letter-spacing:0.7px">19/04/2024</div>
<div class="t " style="left:1368px;top:321.33px;font-size:18px;line-height:24px;color:#0f1526;font-weight:400;letter-spacing:0.2px">Step 1: Quick S<span style="letter-spacing:-0.9px">...</span></div>
<div class="t " style="left:1532px;top:321.33px;font-size:18px;line-height:24px;color:#0f1526;font-weight:400;letter-spacing:0.05px">Amy White, Davi<span style="letter-spacing:-0.9px">...</span></div>
<div class="b" style="left:320px;top:352.999px;width:1482px;height:40.333px;background:#edf0f7;border-bottom:1px solid #e3e7f0"></div>
<div class="t " style="left:320px;top:363.47px;font-size:15.5px;line-height:20px;color:#5a6888;font-weight:400;width:50px;text-align:center">4</div>
<svg class="b" style="left:377px;top:366.76550000000003px;" width="16" height="16" viewBox="0 0 16 16" fill="none"><path d="M3.3 5 L8 9.7 L12.7 5" stroke="#0f1526" stroke-width="1.4" stroke-linecap="round" stroke-linejoin="round"/></svg>
<div class="t " style="left:401px;top:361.67px;font-size:17.5px;line-height:24px;color:#0f1526;font-weight:400;-webkit-text-stroke:0.5px #0f1526;letter-spacing:0.82px">Brandon Roberts</div>
<div class="t" style="right:957px;top:361.17px;font-size:18px;line-height:24px;color:#5a6888;font-weight:400;text-align:right;">5</div>
<div class="t " style="left:1207px;top:366.17px;font-size:12px;line-height:16px;color:#0f1526;font-weight:400;-webkit-text-stroke:0.45px #0f1526;letter-spacing:0.8px">MAX</div>
<div class="t" style="right:454px;top:361.17px;font-size:18px;line-height:24px;color:#0f1526;font-weight:400;text-align:right;letter-spacing:0.7px">03/04/2024</div>
<div class="t " style="left:1709px;top:366.17px;font-size:12px;line-height:16px;color:#0f1526;font-weight:400;-webkit-text-stroke:0.45px #0f1526;letter-spacing:0.75px">SUM</div>
<div class="b" style="left:320px;top:393.332px;width:1482px;height:40.333px;background:#ffffff;border-bottom:1px solid #e3e7f0"></div>
<div class="t " style="left:320px;top:403.80px;font-size:15.5px;line-height:20px;color:#5a6888;font-weight:400;width:50px;text-align:center">5</div>
<svg class="b" style="left:433px;top:403.4985px;" width="21" height="21" viewBox="0 0 21 21" fill="none"><defs><linearGradient id="cg" x1="0" y1="0" x2="0" y2="1"><stop offset="0" stop-color="#e3e9ef"/><stop offset="1" stop-color="#c8d0d8"/></linearGradient></defs><rect x="1" y="1.5" width="18.5" height="19" rx="0.8" fill="url(#cg)"/><path d="M2 19.5 L5.8 14 L9.6 15.5 L17.5 2.5" stroke="#d7263d" stroke-width="1.6" fill="none" stroke-linejoin="round"/></svg>
<div class="t " style="left:462px;top:402.00px;font-size:18px;line-height:24px;color:#0f1526;font-weight:400;letter-spacing:0.2px">Get your campaigns to market faster. Track p<span style="letter-spacing:-0.9px">...</span></div>
<div class="b" style="left:867px;top:404.4985px;width:18px;height:18px;background:#ff9800;border-radius:4px"></div>
<div class="t " style="left:896px;top:402.00px;font-size:18px;line-height:24px;color:#0f1526;font-weight:400;letter-spacing:0px">Under Review</div>
<div class="t" style="right:616px;top:402.00px;font-size:18px;line-height:24px;color:#0f1526;font-weight:400;text-align:right;letter-spacing:0.7px">08/02/2024</div>
<div class="t " style="left:1368px;top:402.00px;font-size:18px;line-height:24px;color:#0f1526;font-weight:400;letter-spacing:0.2px">Step 1: Quick S<span style="letter-spacing:-0.9px">...</span></div>
<div class="t " style="left:1532px;top:402.00px;font-size:18px;line-height:24px;color:#0f1526;font-weight:400;letter-spacing:0.05px">Brandon Roberts</div>
<div class="b" style="left:320px;top:433.665px;width:1482px;height:40.333px;background:#ffffff;border-bottom:1px solid #e3e7f0"></div>
<div class="t " style="left:320px;top:444.13px;font-size:15.5px;line-height:20px;color:#5a6888;font-weight:400;width:50px;text-align:center">6</div>
<div class="t " style="left:432px;top:442.33px;font-size:18px;line-height:24px;color:#0f1526;font-weight:400;letter-spacing:0.2px">External Communication</div>
<div class="b" style="left:867px;top:444.83149999999995px;width:18px;height:18px;background:#ffe035;border-radius:4px"></div>
<div class="t " style="left:896px;top:442.33px;font-size:18px;line-height:24px;color:#0f1526;font-weight:400;letter-spacing:0px">In Progress</div>
<div class="t" style="right:616px;top:442.33px;font-size:18px;line-height:24px;color:#0f1526;font-weight:400;text-align:right;letter-spacing:0.7px">22/03/2024</div>
<div class="t" style="right:454px;top:442.33px;font-size:18px;line-height:24px;color:#d83a44;font-weight:400;text-align:right;letter-spacing:0.7px">03/04/2024</div>
<div class="t " style="left:1368px;top:442.33px;font-size:18px;line-height:24px;color:#0f1526;font-weight:400;letter-spacing:0.2px">1. Initiation, Ste<span style="letter-spacing:-0.9px">...</span></div>
<div class="t " style="left:1532px;top:442.33px;font-size:18px;line-height:24px;color:#0f1526;font-weight:400;letter-spacing:0.05px">Julia Hernandez, <span style="letter-spacing:-0.9px">...</span></div>
<div class="b" style="left:320px;top:473.998px;width:1482px;height:40.333px;background:#ffffff;border-bottom:1px solid #e3e7f0"></div>
<div class="t " style="left:320px;top:484.46px;font-size:15.5px;line-height:20px;color:#5a6888;font-weight:400;width:50px;text-align:center">7</div>
<div class="t " style="left:432px;top:482.66px;font-size:18px;line-height:24px;color:#0f1526;font-weight:400;letter-spacing:0.2px">Weekly Meeting Template</div>
<div class="b" style="left:867px;top:485.1645px;width:18px;height:18px;background:#0f8f80;border-radius:4px"></div>
<div class="t " style="left:896px;top:482.66px;font-size:18px;line-height:24px;color:#0f1526;font-weight:400;letter-spacing:0px">Scheduled</div>
<div class="t" style="right:616px;top:482.66px;font-size:18px;line-height:24px;color:#0f1526;font-weight:400;text-align:right;letter-spacing:0.7px">27/05/2024</div>
<div class="t " style="left:1368px;top:482.66px;font-size:18px;line-height:24px;color:#0f1526;font-weight:400;letter-spacing:0.2px">Templates</div>
<div class="t " style="left:1532px;top:482.66px;font-size:18px;line-height:24px;color:#0f1526;font-weight:400;letter-spacing:0.05px">Amy White, Julia <span style="letter-spacing:-0.9px">...</span></div>
<div class="b" style="left:320px;top:514.331px;width:1482px;height:40.333px;background:#ffffff;border-bottom:1px solid #e3e7f0"></div>
<div class="t " style="left:320px;top:524.80px;font-size:15.5px;line-height:20px;color:#5a6888;font-weight:400;width:50px;text-align:center">8</div>
<div class="t " style="left:432px;top:523.00px;font-size:18px;line-height:24px;color:#0f1526;font-weight:400;letter-spacing:0.2px">3. Initial Draft of Content</div>
<div class="b" style="left:867px;top:525.4975000000001px;width:18px;height:18px;background:#2a90ef;border-radius:4px"></div>
<div class="t " style="left:896px;top:523.00px;font-size:18px;line-height:24px;color:#0f1526;font-weight:400;letter-spacing:0px">New</div>
<div class="t" style="right:616px;top:523.00px;font-size:18px;line-height:24px;color:#0f1526;font-weight:400;text-align:right;letter-spacing:0.7px">04/01/2024</div>
<div class="t" style="right:454px;top:523.00px;font-size:18px;line-height:24px;color:#d83a44;font-weight:400;text-align:right;letter-spacing:0.7px">19/02/2024</div>
<div class="t " style="left:1368px;top:523.00px;font-size:18px;line-height:24px;color:#0f1526;font-weight:400;letter-spacing:0.2px">New Blog Cont<span style="letter-spacing:-0.9px">...</span></div>
<div class="t " style="left:1532px;top:523.00px;font-size:18px;line-height:24px;color:#0f1526;font-weight:400;letter-spacing:0.05px">Brandon Roberts</div>
<div class="b" style="left:320px;top:554.664px;width:1482px;height:40.333px;background:#ffffff;border-bottom:1px solid #e3e7f0"></div>
<div class="t " style="left:320px;top:565.13px;font-size:15.5px;line-height:20px;color:#5a6888;font-weight:400;width:50px;text-align:center">9</div>
<div class="t " style="left:432px;top:563.33px;font-size:18px;line-height:24px;color:#0f1526;font-weight:400;letter-spacing:0.2px">1. Approval (Verify fits into Editorial Strategy)</div>
<div class="b" style="left:867px;top:565.8305px;width:18px;height:18px;background:#2a90ef;border-radius:4px"></div>
<div class="t " style="left:896px;top:563.33px;font-size:18px;line-height:24px;color:#0f1526;font-weight:400;letter-spacing:0px">New</div>
<div class="t" style="right:616px;top:563.33px;font-size:18px;line-height:24px;color:#0f1526;font-weight:400;text-align:right;letter-spacing:0.7px">04/01/2024</div>
<div class="t" style="right:454px;top:563.33px;font-size:18px;line-height:24px;color:#d83a44;font-weight:400;text-align:right;letter-spacing:0.7px">09/02/2024</div>
<div class="t " style="left:1368px;top:563.33px;font-size:18px;line-height:24px;color:#0f1526;font-weight:400;letter-spacing:0.2px">New Blog Cont<span style="letter-spacing:-0.9px">...</span></div>
<div class="t " style="left:1532px;top:563.33px;font-size:18px;line-height:24px;color:#0f1526;font-weight:400;letter-spacing:0.05px">Brandon Roberts</div>
<div class="b" style="left:320px;top:594.997px;width:1482px;height:40.333px;background:#edf0f7;border-bottom:1px solid #e3e7f0"></div>
<div class="t " style="left:320px;top:605.46px;font-size:15.5px;line-height:20px;color:#5a6888;font-weight:400;width:50px;text-align:center">10</div>
<svg class="b" style="left:377px;top:608.7635px;" width="16" height="16" viewBox="0 0 16 16" fill="none"><path d="M3.3 5 L8 9.7 L12.7 5" stroke="#0f1526" stroke-width="1.4" stroke-linecap="round" stroke-linejoin="round"/></svg>
<div class="t " style="left:401px;top:603.66px;font-size:17.5px;line-height:24px;color:#0f1526;font-weight:400;-webkit-text-stroke:0.5px #0f1526;letter-spacing:0.82px">David Martin</div>
<div class="t" style="right:957px;top:603.16px;font-size:18px;line-height:24px;color:#5a6888;font-weight:400;text-align:right;">8</div>
<div class="t " style="left:1207px;top:608.16px;font-size:12px;line-height:16px;color:#0f1526;font-weight:400;-webkit-text-stroke:0.45px #0f1526;letter-spacing:0.8px">MAX</div>
<div class="t" style="right:454px;top:603.16px;font-size:18px;line-height:24px;color:#0f1526;font-weight:400;text-align:right;letter-spacing:0.7px">09/05/2024</div>
<div class="t " style="left:1709px;top:608.16px;font-size:12px;line-height:16px;color:#0f1526;font-weight:400;-webkit-text-stroke:0.45px #0f1526;letter-spacing:0.75px">SUM</div>
<div class="b" style="left:320px;top:635.330px;width:1482px;height:40.333px;background:#ffffff;border-bottom:1px solid #e3e7f0"></div>
<div class="t " style="left:320px;top:645.80px;font-size:15.5px;line-height:20px;color:#5a6888;font-weight:400;width:50px;text-align:center">11</div>
<svg class="b" style="left:432px;top:645.4965px;" width="23" height="22" viewBox="0 0 23 22" fill="none"><circle cx="8.4" cy="12.6" r="7.6" fill="#c8202f"/><circle cx="8.4" cy="12.6" r="5.6" fill="#f4f4f4"/><circle cx="8.4" cy="12.6" r="4" fill="#d42a36"/><circle cx="8.4" cy="12.6" r="2.4" fill="#f4f4f4"/><circle cx="8.4" cy="12.6" r="1.2" fill="#d42a36"/><path d="M8.6 12.4 L18 4.2" stroke="#6aa9b8" stroke-width="1.6"/><path d="M16.2 2.2 L18.6 1 L18.8 4 L21.8 4.6 L19.6 6.6 L16.8 5.8 Z" fill="#3fb3c9"/></svg>
<div class="t " style="left:462px;top:644.00px;font-size:18px;line-height:24px;color:#0f1526;font-weight:400;letter-spacing:0.2px">See all your to-dos in one place and get them<span style="letter-spacing:-0.9px">...</span></div>
<div class="b" style="left:867px;top:646.4965px;width:18px;height:18px;background:#8e2aa7;border-radius:4px"></div>
<div class="t " style="left:896px;top:644.00px;font-size:18px;line-height:24px;color:#0f1526;font-weight:400;letter-spacing:0px">Approved</div>
<div class="t" style="right:616px;top:644.00px;font-size:18px;line-height:24px;color:#0f1526;font-weight:400;text-align:right;letter-spacing:0.7px">08/02/2024</div>
<div class="t " style="left:1368px;top:644.00px;font-size:18px;line-height:24px;color:#0f1526;font-weight:400;letter-spacing:0.2px">Step 1: Quick S<span style="letter-spacing:-0.9px">...</span></div>
<div class="t " style="left:1532px;top:644.00px;font-size:18px;line-height:24px;color:#0f1526;font-weight:400;letter-spacing:0.05px">David Martin</div>
<div class="b" style="left:320px;top:675.663px;width:1482px;height:40.333px;background:#ffffff;border-bottom:1px solid #e3e7f0"></div>
<div class="t " style="left:320px;top:686.13px;font-size:15.5px;line-height:20px;color:#5a6888;font-weight:400;width:50px;text-align:center">12</div>
<div class="t " style="left:432px;top:684.33px;font-size:18px;line-height:24px;color:#0f1526;font-weight:400;letter-spacing:0.2px">Communication</div>
<div class="b" style="left:867px;top:686.8295px;width:18px;height:18px;background:#ffe035;border-radius:4px"></div>
<div class="t " style="left:896px;top:684.33px;font-size:18px;line-height:24px;color:#0f1526;font-weight:400;letter-spacing:0px">In Progress</div>
<div class="t" style="right:616px;top:684.33px;font-size:18px;line-height:24px;color:#0f1526;font-weight:400;text-align:right;letter-spacing:0.7px">18/04/2024</div>
<div class="t" style="right:454px;top:684.33px;font-size:18px;line-height:24px;color:#d83a44;font-weight:400;text-align:right;letter-spacing:0.7px">09/05/2024</div>
<svg class="b" style="left:1368px;top:685.8295px;" width="22" height="22" viewBox="0 0 22 22" fill="none"><path d="M12 3 Q13 10 19 11 Q13 12 12 19 Q11 12 5 11 Q11 10 12 3 Z" fill="#f6c026"/><path d="M5 2 Q5.4 4.6 8 5 Q5.4 5.4 5 8 Q4.6 5.4 2 5 Q4.6 4.6 5 2 Z" fill="#f6c026"/><path d="M5 14 Q5.3 16.2 7.5 16.5 Q5.3 16.8 5 19 Q4.7 16.8 2.5 16.5 Q4.7 16.2 5 14 Z" fill="#f6c026"/></svg>
<div class="t " style="left:1398px;top:684.33px;font-size:18px;line-height:24px;color:#0f1526;font-weight:400;letter-spacing:0.2px">Detailed ins<span style="letter-spacing:-0.9px">...</span></div>
<div class="t " style="left:1532px;top:684.33px;font-size:18px;line-height:24px;color:#0f1526;font-weight:400;letter-spacing:0.05px">David Martin</div>
<div class="b" style="left:320px;top:715.996px;width:1482px;height:40.333px;background:#ffffff;border-bottom:1px solid #e3e7f0"></div>
<div class="t " style="left:320px;top:726.46px;font-size:15.5px;line-height:20px;color:#5a6888;font-weight:400;width:50px;text-align:center">13</div>
<div class="t " style="left:432px;top:724.66px;font-size:18px;line-height:24px;color:#0f1526;font-weight:400;letter-spacing:0.2px">03. External Research</div>
<div class="b" style="left:867px;top:727.1625px;width:18px;height:18px;background:#11bed6;border-radius:4px"></div>
<div class="t " style="left:896px;top:724.66px;font-size:18px;line-height:24px;color:#0f1526;font-weight:400;letter-spacing:0px">New</div>
<div class="t" style="right:616px;top:724.66px;font-size:18px;line-height:24px;color:#0f1526;font-weight:400;text-align:right;letter-spacing:0.7px">08/02/2024</div>
<div class="t " style="left:1368px;top:724.66px;font-size:18px;line-height:24px;color:#0f1526;font-weight:400;letter-spacing:0.2px">Website Launc<span style="letter-spacing:-0.9px">...</span></div>
<div class="t " style="left:1532px;top:724.66px;font-size:18px;line-height:24px;color:#0f1526;font-weight:400;letter-spacing:0.05px">David Martin</div>
<div class="b" style="left:320px;top:756.329px;width:1482px;height:40.333px;background:#ffffff;border-bottom:1px solid #e3e7f0"></div>
<div class="t " style="left:320px;top:766.80px;font-size:15.5px;line-height:20px;color:#5a6888;font-weight:400;width:50px;text-align:center">14</div>
<div class="t " style="left:432px;top:765.00px;font-size:18px;line-height:24px;color:#0f1526;font-weight:400;letter-spacing:0.2px">Weekly Meeting Template</div>
<div class="b" style="left:867px;top:767.4955px;width:18px;height:18px;background:#0f8f80;border-radius:4px"></div>
<div class="t " style="left:896px;top:765.00px;font-size:18px;line-height:24px;color:#0f1526;font-weight:400;letter-spacing:0px">Scheduled</div>
<div class="t" style="right:616px;top:765.00px;font-size:18px;line-height:24px;color:#0f1526;font-weight:400;text-align:right;letter-spacing:0.7px">27/05/2024</div>
<div class="t " style="left:1368px;top:765.00px;font-size:18px;line-height:24px;color:#0f1526;font-weight:400;letter-spacing:0.2px">Templates</div>
<div class="t " style="left:1532px;top:765.00px;font-size:18px;line-height:24px;color:#0f1526;font-weight:400;letter-spacing:0.05px">Amy White, Julia <span style="letter-spacing:-0.9px">...</span></div>
<div class="b" style="left:320px;top:796.662px;width:1482px;height:40.333px;background:#ffffff;border-bottom:1px solid #e3e7f0"></div>
<div class="t " style="left:320px;top:807.13px;font-size:15.5px;line-height:20px;color:#5a6888;font-weight:400;width:50px;text-align:center">15</div>
<div class="t " style="left:432px;top:805.33px;font-size:18px;line-height:24px;color:#0f1526;font-weight:400;letter-spacing:0.2px">4. Request Graphics</div>
<div class="b" style="left:867px;top:807.8285000000001px;width:18px;height:18px;background:#11bed6;border-radius:4px"></div>
<div class="t " style="left:896px;top:805.33px;font-size:18px;line-height:24px;color:#0f1526;font-weight:400;letter-spacing:0px">In Progress</div>
<div class="t" style="right:616px;top:805.33px;font-size:18px;line-height:24px;color:#0f1526;font-weight:400;text-align:right;letter-spacing:0.7px">04/01/2024</div>
<div class="t" style="right:454px;top:805.33px;font-size:18px;line-height:24px;color:#d83a44;font-weight:400;text-align:right;letter-spacing:0.7px">26/02/2024</div>
<div class="t " style="left:1368px;top:805.33px;font-size:18px;line-height:24px;color:#0f1526;font-weight:400;letter-spacing:0.2px">New Blog Cont<span style="letter-spacing:-0.9px">...</span></div>
<div class="t " style="left:1532px;top:805.33px;font-size:18px;line-height:24px;color:#0f1526;font-weight:400;letter-spacing:0.05px">David Martin</div>
<div class="b" style="left:320px;top:836.995px;width:1482px;height:40.333px;background:#ffffff;border-bottom:1px solid #e3e7f0"></div>
<div class="t " style="left:320px;top:847.46px;font-size:15.5px;line-height:20px;color:#5a6888;font-weight:400;width:50px;text-align:center">16</div>
<div class="t " style="left:432px;top:845.66px;font-size:18px;line-height:24px;color:#0f1526;font-weight:400;letter-spacing:0.2px">2. Schedule Blog Post</div>
<div class="b" style="left:867px;top:848.1615px;width:18px;height:18px;background:#11bed6;border-radius:4px"></div>
<div class="t " style="left:896px;top:845.66px;font-size:18px;line-height:24px;color:#0f1526;font-weight:400;letter-spacing:0px">In Progress</div>
<div class="t" style="right:616px;top:845.66px;font-size:18px;line-height:24px;color:#0f1526;font-weight:400;text-align:right;letter-spacing:0.7px">04/01/2024</div>
<div class="t" style="right:454px;top:845.66px;font-size:18px;line-height:24px;color:#d83a44;font-weight:400;text-align:right;letter-spacing:0.7px">12/02/2024</div>
<div class="t " style="left:1368px;top:845.66px;font-size:18px;line-height:24px;color:#0f1526;font-weight:400;letter-spacing:0.2px">New Blog Cont<span style="letter-spacing:-0.9px">...</span></div>
<div class="t " style="left:1532px;top:845.66px;font-size:18px;line-height:24px;color:#0f1526;font-weight:400;letter-spacing:0.05px">David Martin</div>
<div class="b" style="left:320px;top:877.328px;width:1482px;height:40.333px;background:#ffffff;border-bottom:1px solid #e3e7f0"></div>
<div class="t " style="left:320px;top:887.79px;font-size:15.5px;line-height:20px;color:#5a6888;font-weight:400;width:50px;text-align:center">17</div>
<svg class="b" style="left:433px;top:887.4945px;" width="21" height="21" viewBox="0 0 21 21" fill="none"><rect x="1" y="1" width="18" height="19" rx="0.6" fill="#ecebe8" stroke="#d6d5d0" stroke-width="0.6"/><path d="M4 6 H13 M4 9 H12 M4 12 H9" stroke="#9a9a9a" stroke-width="0.9"/><path d="M9 17 L17 6 L20 8.5 L12 19 L8.5 19.5 Z" fill="#f5b62a"/><path d="M17 6 L20 8.5 L21 7 L18.5 4.5 Z" fill="#e9707a"/></svg>
<div class="t " style="left:462px;top:885.99px;font-size:18px;line-height:24px;color:#0f1526;font-weight:400;letter-spacing:0.2px">Launch effective campaigns in seconds. Get <span style="letter-spacing:-0.9px">...</span></div>
<div class="b" style="left:867px;top:888.4945px;width:18px;height:18px;background:#11bed6;border-radius:4px"></div>
<div class="t " style="left:896px;top:885.99px;font-size:18px;line-height:24px;color:#0f1526;font-weight:400;letter-spacing:0px">In Progress</div>
<div class="t" style="right:616px;top:885.99px;font-size:18px;line-height:24px;color:#0f1526;font-weight:400;text-align:right;letter-spacing:0.7px">08/02/2024</div>
<div class="t" style="right:454px;top:885.99px;font-size:18px;line-height:24px;color:#d83a44;font-weight:400;text-align:right;letter-spacing:0.7px">19/04/2024</div>
<div class="t " style="left:1368px;top:885.99px;font-size:18px;line-height:24px;color:#0f1526;font-weight:400;letter-spacing:0.2px">Step 1: Quick S<span style="letter-spacing:-0.9px">...</span></div>
<div class="t " style="left:1532px;top:885.99px;font-size:18px;line-height:24px;color:#0f1526;font-weight:400;letter-spacing:0.05px">Amy White, Davi<span style="letter-spacing:-0.9px">...</span></div>
<div class="b" style="left:320px;top:917.661px;width:1482px;height:40.333px;background:#ffffff;border-bottom:1px solid #e3e7f0"></div>
<div class="t " style="left:320px;top:928.13px;font-size:15.5px;line-height:20px;color:#5a6888;font-weight:400;width:50px;text-align:center">18</div>
<div class="t " style="left:432px;top:926.33px;font-size:18px;line-height:24px;color:#0f1526;font-weight:400;letter-spacing:0.2px">0. Agree on Target Segment</div>
<div class="b" style="left:867px;top:928.8275px;width:18px;height:18px;background:#2a90ef;border-radius:4px"></div>
<div class="t " style="left:896px;top:926.33px;font-size:18px;line-height:24px;color:#0f1526;font-weight:400;letter-spacing:0px">New</div>
<div class="t" style="right:616px;top:926.33px;font-size:18px;line-height:24px;color:#0f1526;font-weight:400;text-align:right;letter-spacing:0.7px">04/01/2024</div>
<div class="t " style="left:1368px;top:926.33px;font-size:18px;line-height:24px;color:#0f1526;font-weight:400;letter-spacing:0.2px">New Blog Cont<span style="letter-spacing:-0.9px">...</span></div>
<div class="t " style="left:1532px;top:926.33px;font-size:18px;line-height:24px;color:#0f1526;font-weight:400;letter-spacing:0.05px">David Martin</div>
<div class="b" style="left:320px;top:957.994px;width:1482px;height:40.333px;background:#edf0f7;border-bottom:1px solid #e3e7f0"></div>
<div class="t " style="left:320px;top:968.46px;font-size:15.5px;line-height:20px;color:#5a6888;font-weight:400;width:50px;text-align:center">19</div>
<svg class="b" style="left:377px;top:971.7605px;" width="16" height="16" viewBox="0 0 16 16" fill="none"><path d="M3.3 5 L8 9.7 L12.7 5" stroke="#0f1526" stroke-width="1.4" stroke-linecap="round" stroke-linejoin="round"/></svg>
<div class="t " style="left:401px;top:966.66px;font-size:17.5px;line-height:24px;color:#0f1526;font-weight:400;-webkit-text-stroke:0.5px #0f1526;letter-spacing:0.82px">Jason Mills</div>
<div class="t" style="right:957px;top:966.16px;font-size:18px;line-height:24px;color:#5a6888;font-weight:400;text-align:right;">2</div>
<div class="b" style="left:370px;top:193px;width:1px;height:830px;background:#e3e7f0"></div>
<div class="b" style="left:854px;top:193px;width:1px;height:830px;background:#e3e7f0"></div>
<div class="b" style="left:1034px;top:193px;width:1px;height:830px;background:#e3e7f0"></div>
<div class="b" style="left:1195px;top:193px;width:1px;height:830px;background:#e3e7f0"></div>
<div class="b" style="left:1357px;top:193px;width:1px;height:830px;background:#e3e7f0"></div>
<div class="b" style="left:1521px;top:193px;width:1px;height:830px;background:#e3e7f0"></div>
<div class="b" style="left:1697px;top:193px;width:1px;height:830px;background:#e3e7f0"></div>
<div class="b" style="left:320px;top:232px;width:1482px;height:1px;background:#e3e7f0"></div>
<div class="b" style="left:320px;top:982px;width:1482px;height:42px;background:linear-gradient(180deg,#fcfcfc 0%,#ececec 85%,#e6e6e6 100%);border-top:1px solid #e9ebf0"></div>
<div class="b" style="left:370px;top:982px;width:1px;height:42px;background:#e3e7f0"></div>
<div class="b" style="left:854px;top:982px;width:1px;height:42px;background:#e3e7f0"></div>
<div class="b" style="left:1034px;top:982px;width:1px;height:42px;background:#e3e7f0"></div>
<div class="b" style="left:1195px;top:982px;width:1px;height:42px;background:#e3e7f0"></div>
<div class="b" style="left:1357px;top:982px;width:1px;height:42px;background:#e3e7f0"></div>
<div class="b" style="left:1521px;top:982px;width:1px;height:42px;background:#e3e7f0"></div>
<div class="b" style="left:1697px;top:982px;width:1px;height:42px;background:#e3e7f0"></div>
<div class="t " style="left:381px;top:991.00px;font-size:18px;line-height:24px;color:#0f1526;font-weight:400;letter-spacing:0.3px">Total: 566 tasks</div>
<div class="t " style="left:1207px;top:995.00px;font-size:12px;line-height:16px;color:#0f1526;font-weight:400;-webkit-text-stroke:0.45px #0f1526;letter-spacing:0.8px">MAX</div>
<div class="t" style="right:454px;top:991.00px;font-size:18px;line-height:24px;color:#0f1526;font-weight:400;text-align:right;letter-spacing:0.7px">14/10/2024</div>
<div class="t " style="left:1709px;top:995.00px;font-size:12px;line-height:16px;color:#0f1526;font-weight:400;-webkit-text-stroke:0.45px #0f1526;letter-spacing:0.75px">SUM</div>
<div class="t " style="left:1772.5px;top:991.00px;font-size:18px;line-height:24px;color:#0f1526;font-weight:400;letter-spacing:0.7px">265</div>
<div class="b" style="left:320px;top:71px;width:1px;height:953px;background:#e6e9f0"></div>
<div class="b" style="left:319px;top:0px;width:1px;height:1024px;background:#3a4766"></div>
<div class="b" style="left:0px;top:1022px;width:320px;height:1px;background:#414a66"></div>
<div class="b" style="left:320px;top:1022px;width:1482px;height:1px;background:#eef0f5"></div>
</div><div id="frame"></div></body></html>
